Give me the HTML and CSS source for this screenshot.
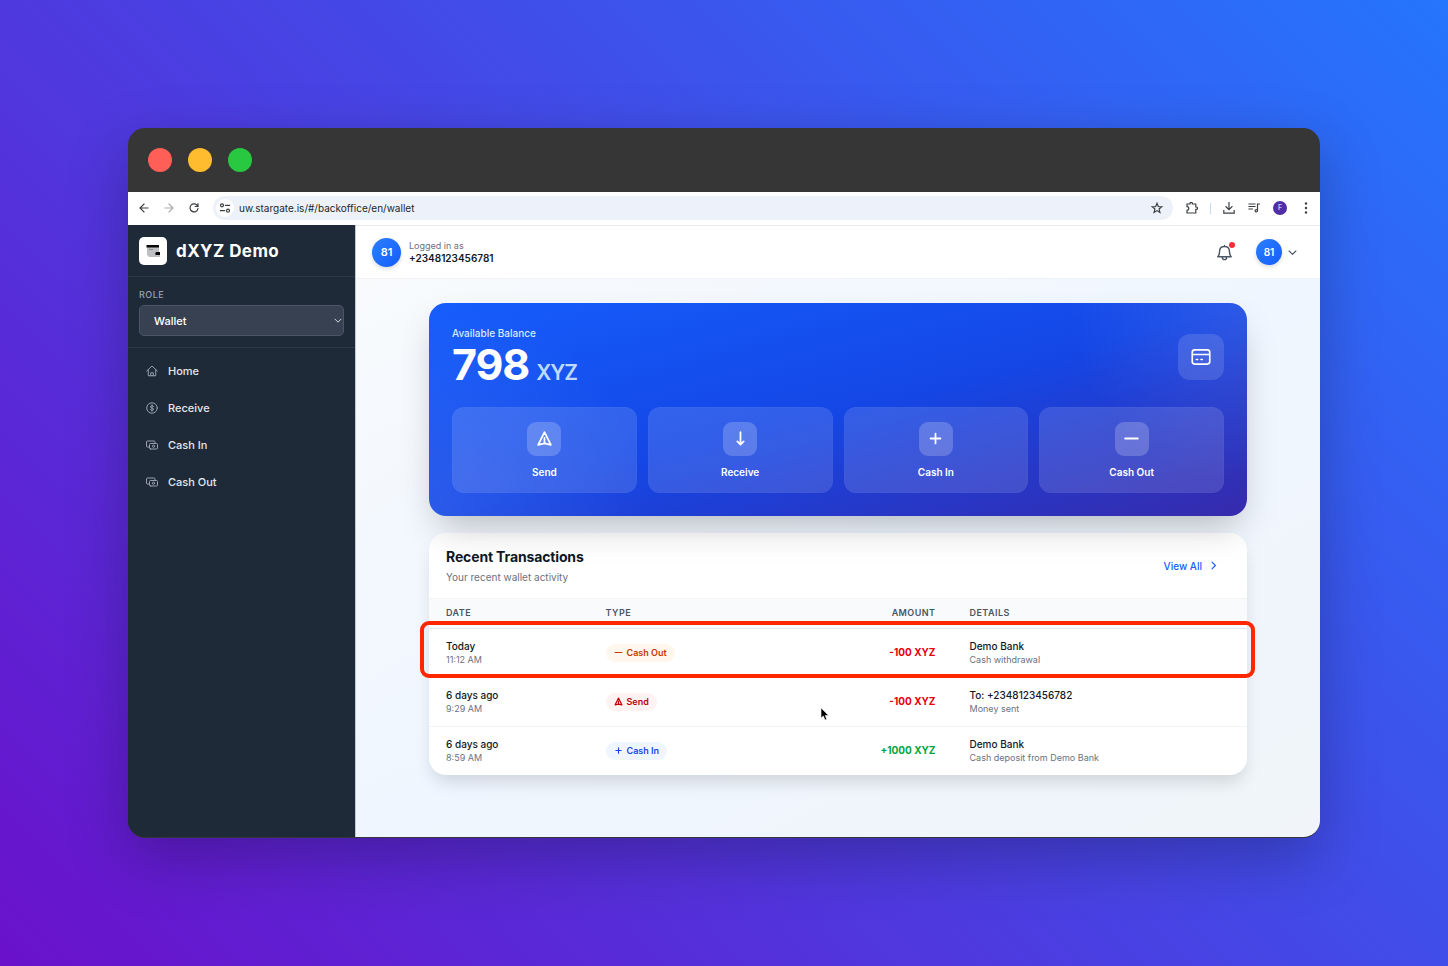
FILE: index.html
```html
<!DOCTYPE html>
<html lang="en">
<head>
<meta charset="utf-8">
<title>dXYZ Demo - Wallet</title>
<meta name="viewport" content="width=device-width, initial-scale=1">
<link rel="stylesheet" href="styles.css">
</head>
<body>

<!-- shared icons -->
<svg class="defs" width="0" height="0" aria-hidden="true">
	<symbol id="i-send" viewBox="0 0 24 24"><path d="M12 19l9 2-9-18-9 18 9-2zm0 0v-8"/></symbol>
	<symbol id="i-plus" viewBox="0 0 24 24"><path d="M12 5v14M5 12h14"/></symbol>
	<symbol id="i-minus" viewBox="0 0 24 24"><path d="M3 12h18"/></symbol>
	<symbol id="i-down" viewBox="0 0 24 24"><path d="M12 3v17M7.500 16l4.500 4.500 4.500-4.500"/></symbol>
	<symbol id="i-chev" viewBox="0 0 24 24"><path d="M3 8l9 9 9-9"/></symbol>
	<symbol id="i-cash" viewBox="0 0 24 24"><path d="M18 7.500V6a2 2 0 0 0-2-2H3a2 2 0 0 0-2 2v8a2 2 0 0 0 2 2h3M9 20h12a2 2 0 0 0 2-2v-7a2 2 0 0 0-2-2H9a2 2 0 0 0-2 2v7a2 2 0 0 0 2 2z"/><circle cx="15" cy="14.500" r="2.200"/></symbol>
</svg>

<div class="window">

	<div class="titlebar">
		<span class="dot red"></span>
		<span class="dot yellow"></span>
		<span class="dot green"></span>
	</div>

	<div class="toolbar">
		<button type="button" class="tool" aria-label="Back"><svg viewBox="0 0 12 12"><path d="M10 6H2M6 2L2 6l4 4"/></svg></button>
		<button type="button" class="tool off" aria-label="Forward"><svg viewBox="0 0 12 12"><path d="M2 6h8M6 2l4 4-4 4"/></svg></button>
		<button type="button" class="tool" aria-label="Reload"><svg viewBox="0 0 12 12"><path d="M9.700 4.200A4 4 0 1 0 10 6.500M10 1.800v2.700H7.300"/></svg></button>
		<div class="address">
			<span class="site"><svg viewBox="0 0 12 12"><circle cx="3" cy="3.300" r="1.500"/><path d="M6.500 3.300h4M1.500 8.700h4"/><circle cx="9" cy="8.700" r="1.500"/></svg></span>
			<input type="text" aria-label="Address" value="uw.stargate.is/#/backoffice/en/wallet">
			<button type="button" class="tool" aria-label="Bookmark"><svg viewBox="0 0 12 12"><path d="M6 1.300l1.300 3.200 3.400.300-2.600 2.200.800 3.400L6 8.600l-2.900 1.800.800-3.400L1.300 4.800l3.400-.300z"/></svg></button>
		</div>
		<div class="tools">
			<button type="button" class="tool" aria-label="Extensions"><svg viewBox="0 0 12 12"><path d="M1 2h3v-.500a1.200 1.200 0 0 1 2.400 0V2h3.400v3h.500a1.200 1.200 0 0 1 0 2.400h-.500V11H1V8.300a1.800 1.800 0 0 0 0-3.600z"/></svg></button>
			<span class="bar"></span>
			<button type="button" class="tool" aria-label="Downloads"><svg viewBox="0 0 12 12"><path d="M6 .500v7M3 4.700l3 3 3-3M.800 8.500v2.700h10.400V8.500"/></svg></button>
			<button type="button" class="tool" aria-label="Media"><svg viewBox="0 0 12 12"><path d="M1 2h6M1 4.500h6M1 7h3.500M9.500 8.500V2h2"/><circle cx="8.300" cy="8.700" r="1.200"/></svg></button>
			<button type="button" class="profile">F</button>
			<button type="button" class="tool menu" aria-label="Menu"><svg viewBox="0 0 12 12"><circle cx="6" cy="1.500" r="1.200"/><circle cx="6" cy="6" r="1.200"/><circle cx="6" cy="10.500" r="1.200"/></svg></button>
		</div>
	</div>

	<div class="app">
		<aside class="sidebar">
			<div class="brand">
				<span class="logo"><svg viewBox="0 0 28 28"><path fill="#bdbfc2" d="M8 10h12v6h1v4H10l-2-2z"/><path fill="#050505" d="M7.500 8h12.500v2.500h-12.500zM17 15h4v3h-4l-1-1z"/><path fill="#8b8d90" d="M10 12h4v1h-4z"/></svg></span>
				<h1>dXYZ Demo</h1>
			</div>
			<div class="role">
				<label for="role">ROLE</label>
				<div class="select">
					<select id="role"><option>Wallet</option></select>
					<svg class="icon"><use href="#i-chev"/></svg>
				</div>
			</div>
			<nav>
				<a href="#"><svg viewBox="0 0 24 24"><path d="M1.500 12L12 2l10.500 10M4.500 9.500V21.500h15V9.500M9.500 21.500v-6h5v6"/></svg>Home</a>
				<a href="#"><svg viewBox="0 0 24 24"><circle cx="12" cy="12" r="10.500"/><path d="M12 5.500v13M15.200 9c-.500-1-1.700-1.500-3.200-1.500-1.800 0-3.200.800-3.200 2.200 0 3.300 6.500 1.500 6.500 4.700 0 1.400-1.500 2.200-3.300 2.200-1.600 0-2.900-.600-3.400-1.700"/></svg>Receive</a>
				<a href="#"><svg><use href="#i-cash"/></svg>Cash In</a>
				<a href="#"><svg><use href="#i-cash"/></svg>Cash Out</a>
			</nav>
		</aside>

		<div class="main">
			<header class="topbar">
				<span class="avatar large">81</span>
				<div class="who">
					<span>Logged in as</span>
					<strong>+2348123456781</strong>
				</div>
				<button type="button" class="bell" aria-label="Notifications">
					<svg viewBox="0 0 24 24"><path d="M2.500 18h19c-2-2-2.500-3.500-2.500-7.500 0-4-2.500-7-7-7s-7 3-7 7c0 4-.500 5.500-2.500 7.500zM12 3.500V2M9 18.500v.500a3 3 0 0 0 6 0v-.500"/></svg>
					<span class="badge"></span>
				</button>
				<button type="button" class="account">
					<span class="avatar">81</span>
					<svg class="icon"><use href="#i-chev"/></svg>
				</button>
			</header>

			<div class="content">
				<section class="balance">
					<div class="balance-top">
						<div>
							<p class="caption">Available Balance</p>
							<p class="total">798 <span>XYZ</span></p>
						</div>
						<span class="card-icon"><svg viewBox="0 0 24 24"><rect x="1.500" y="3.500" width="21" height="17" rx="3"/><path d="M2 9h20M6.500 15h1.500M12 15h1.500"/></svg></span>
					</div>
					<div class="actions">
						<button type="button"><span><svg><use href="#i-send"/></svg></span>Send</button>
						<button type="button"><span><svg><use href="#i-down"/></svg></span>Receive</button>
						<button type="button"><span><svg><use href="#i-plus"/></svg></span>Cash In</button>
						<button type="button"><span><svg><use href="#i-minus"/></svg></span>Cash Out</button>
					</div>
				</section>

				<section class="recent">
					<div class="recent-top">
						<div>
							<h2>Recent Transactions</h2>
							<p>Your recent wallet activity</p>
						</div>
						<a href="#">View All <svg class="icon" viewBox="0 0 24 24"><path d="M8 3l9 9-9 9"/></svg></a>
					</div>
					<div class="table-wrap">
						<table>
							<thead>
								<tr><th class="c-date">Date</th><th class="c-type">Type</th><th class="c-amount">Amount</th><th>Details</th></tr>
							</thead>
							<tbody>
								<tr>
									<td><b>Today</b><small>11:12 AM</small></td>
									<td><span class="tag out"><svg><use href="#i-minus"/></svg>Cash Out</span></td>
									<td class="amount minus">-100 XYZ</td>
									<td><b>Demo Bank</b><small>Cash withdrawal</small></td>
								</tr>
								<tr>
									<td><b>6 days ago</b><small>9:29 AM</small></td>
									<td><span class="tag send"><svg><use href="#i-send"/></svg>Send</span></td>
									<td class="amount minus">-100 XYZ</td>
									<td><b>To: +2348123456782</b><small>Money sent</small></td>
								</tr>
								<tr>
									<td><b>6 days ago</b><small>8:59 AM</small></td>
									<td><span class="tag in"><svg><use href="#i-plus"/></svg>Cash In</span></td>
									<td class="amount plus">+1000 XYZ</td>
									<td><b>Demo Bank</b><small>Cash deposit from Demo Bank</small></td>
								</tr>
							</tbody>
						</table>
						<div class="highlight"></div>
						<svg class="cursor" viewBox="0 0 10 14"><path d="M1 1v10l2.300-2 1.700 4 1.800-.800L5.200 8.400h3.300z"/></svg>
					</div>
				</section>
			</div>
		</div>
	</div>
</div>

</body>
</html>
```
FILE: styles.css
```css
* {
	box-sizing: border-box;
}

body {
	margin: 0;
	padding: 128px;
	min-height: 100vh;
	display: flex;
	font-family: Inter, "Liberation Sans", sans-serif;
	font-size: 10px;
	line-height: 14px;
	color: #101828;
	background: linear-gradient(45deg, #6a11cb, #2575fc);
}

h1, h2, p {
	margin: 0;
}

button {
	padding: 0;
	border: 0;
	background: none;
	font: inherit;
	color: inherit;
}

a {
	text-decoration: none;
}

svg {
	display: block;
	fill: none;
	stroke: currentColor;
	stroke-width: 2;
	stroke-linecap: round;
	stroke-linejoin: round;
}

.defs {
	position: absolute;
}

.icon {
	width: 9px;
	height: 9px;
	stroke-width: 3;
}

/* browser window */

.window {
	flex: 1;
	min-width: 0;
	display: flex;
	flex-direction: column;
	border-bottom: 1px solid #363636;
	border-radius: 17px;
	overflow: hidden;
	background: #363636;
	box-shadow: 0 20px 60px rgba(0, 0, 0, .25);
}

.titlebar {
	height: 64px;
	padding: 0 20px;
	display: flex;
	align-items: center;
	gap: 16px;
}

.dot {
	width: 24px;
	height: 24px;
	border-radius: 50%;
}

.red { background: #ff5f57; }
.yellow { background: #febc2e; }
.green { background: #28c840; }

.toolbar {
	height: 34px;
	padding: 0 8px 1px 10px;
	display: flex;
	align-items: center;
	gap: 13px;
	background: #fff;
	border-bottom: 1px solid #e8eaee;
	color: #3c4043;
}

.tool svg,
.site svg {
	width: 12px;
	height: 12px;
	stroke-width: 1.2;
	stroke-linecap: square;
	stroke-linejoin: miter;
}

.off {
	color: #a9acb0;
}

.menu svg {
	fill: currentColor;
	stroke: none;
}

.address {
	flex: 1;
	height: 24px;
	padding: 0 10px 0 3px;
	display: flex;
	align-items: center;
	gap: 5px;
	border-radius: 12px;
	background: #ecf1fa;
}

.address input {
	flex: 1;
	min-width: 0;
	padding: 0;
	border: 0;
	background: none;
	font: inherit;
	color: #24272b;
}

.site {
	width: 18px;
	height: 18px;
	padding: 3px;
	border-radius: 50%;
	background: #fff;
}

.tools {
	display: flex;
	align-items: center;
	gap: 13px;
}

.bar {
	width: 1px;
	height: 11px;
	margin: 0 -1px;
	background: #c6dafa;
}

.profile {
	width: 14px;
	height: 14px;
	border-radius: 50%;
	background: #512da8;
	color: #fff;
	font-size: 7px;
}

/* sidebar */

.app {
	flex: 1;
	display: flex;
	margin-top: -1px;
}

.sidebar {
	width: 228px;
	flex-shrink: 0;
	border-right: 1px solid #c3c9d1;
	background: #1e2a37;
	color: #e5e7eb;
}

.brand {
	height: 52px;
	padding: 0 11px;
	display: flex;
	align-items: center;
	gap: 9px;
	border-bottom: 1px solid #2d3947;
}

.logo {
	width: 28px;
	height: 28px;
	border-radius: 5px;
	background: #fff;
}

.logo svg {
	stroke: none;
}

.brand h1 {
	font-size: 17px;
	line-height: 24px;
	font-weight: 700;
	letter-spacing: .025em;
	color: #fff;
}

.role {
	padding: 11px;
	border-bottom: 1px solid #2d3947;
}

.role label {
	display: block;
	margin-bottom: 3px;
	font-size: 9px;
	font-weight: 500;
	letter-spacing: .05em;
	color: #99a1af;
}

.select {
	position: relative;
}

.select select {
	width: 100%;
	height: 31px;
	padding: 0 14px;
	appearance: none;
	border: 1px solid #4a5565;
	border-radius: 5px;
	background: #374151;
	font: 500 11px Inter, sans-serif;
	color: #fff;
}

.select .icon {
	position: absolute;
	right: 2px;
	top: 11px;
	width: 8px;
	color: #d1d5dc;
}

nav {
	padding: 7px 18px;
	display: grid;
	gap: 6px;
}

nav a {
	height: 31px;
	display: flex;
	align-items: center;
	gap: 10px;
	font-size: 11px;
	font-weight: 500;
	color: #e5e7eb;
}

nav svg {
	width: 12px;
	height: 12px;
	color: #99a1af;
}

/* top bar */

.main {
	flex: 1;
	min-width: 0;
	display: flex;
	flex-direction: column;
}

.topbar {
	height: 54px;
	padding: 0 23px 0 16px;
	display: flex;
	align-items: center;
	background: #fff;
	border-top: 1px solid #e8eaee;
	border-bottom: 1px solid #f0f2f5;
}

.avatar {
	width: 26px;
	height: 26px;
	border-radius: 50%;
	display: flex;
	align-items: center;
	justify-content: center;
	background: linear-gradient(135deg, #2b7fff, #155dfc);
	box-shadow: 0 2px 4px rgba(0, 0, 0, .15);
	font-weight: 600;
	color: #fff;
}

.avatar.large {
	width: 29px;
	height: 29px;
	font-size: 11px;
}

.who {
	margin: 0 auto 0 8px;
	line-height: 13px;
}

.who span,
.who strong {
	display: block;
}

.who span {
	font-size: 9px;
	color: #6a7282;
}

.who strong {
	font-weight: 600;
}

.bell {
	position: relative;
	margin-right: 23px;
	color: #4a5565;
}

.bell svg {
	width: 17px;
	height: 17px;
}

.badge {
	position: absolute;
	top: -2px;
	right: -2px;
	width: 6px;
	height: 6px;
	border-radius: 50%;
	background: #fb2c36;
}

.account {
	display: flex;
	align-items: center;
	gap: 6px;
}

.account .icon {
	color: #4a5565;
}

/* wallet */

.content {
	flex: 1;
	padding: 24px 34px;
	background: linear-gradient(to bottom right, #f8fafc, #eff6ff 50%, #f1f5f9);
}

.balance,
.recent {
	max-width: 818px;
	margin: 0 auto;
	position: relative;
	border-radius: 17px;
}

.balance {
	z-index: 1;
	margin-bottom: 17px;
	padding: 23px;
	background:
		radial-gradient(circle at 100% 0, rgba(255, 255, 255, .1), transparent 180px),
		radial-gradient(circle at 0 100%, rgba(255, 255, 255, .1), transparent 220px),
		linear-gradient(to bottom right, #155dfc, #1447e6 50%, #372aac);
	box-shadow: 0 18px 36px -9px rgba(0, 0, 0, .25);
	color: #fff;
}

.balance-top {
	display: flex;
	align-items: center;
	justify-content: space-between;
	margin-bottom: 20px;
}

.caption {
	font-weight: 500;
	color: #dbeafe;
}

.total {
	margin-top: 2px;
	display: flex;
	align-items: baseline;
	gap: 7px;
	font-size: 43px;
	line-height: 45px;
	font-weight: 700;
	letter-spacing: -.025em;
}

.total span {
	font-size: 21px;
	line-height: 24px;
	font-weight: 600;
	color: #bedbff;
}

.card-icon {
	width: 46px;
	height: 46px;
	display: grid;
	place-items: center;
	border-radius: 12px;
	background: rgba(255, 255, 255, .13);
}

.card-icon svg {
	width: 20px;
	height: 20px;
}

.actions {
	display: grid;
	grid-template-columns: repeat(4, 1fr);
	gap: 11px;
}

.actions button {
	height: 86px;
	display: flex;
	flex-direction: column;
	align-items: center;
	justify-content: center;
	gap: 9px;
	border: 1px solid rgba(255, 255, 255, .02);
	border-radius: 12px;
	background: rgba(255, 255, 255, .13);
	font-weight: 600;
}

.actions span {
	width: 34px;
	height: 34px;
	display: grid;
	place-items: center;
	border-radius: 9px;
	background: rgba(255, 255, 255, .2);
}

.actions svg {
	width: 17px;
	height: 17px;
	stroke-width: 2.5;
}

/* recent transactions */

.recent {
	background: #fff;
	box-shadow: 0 10px 18px -4px rgba(0, 0, 0, .15);
}

.recent-top {
	height: 66px;
	padding: 0 29px 0 17px;
	display: flex;
	align-items: center;
	justify-content: space-between;
	border-bottom: 1px solid #f3f4f6;
}

.recent-top h2 {
	margin-bottom: 3px;
	font-size: 14px;
	line-height: 20px;
	font-weight: 700;
	letter-spacing: -.01em;
}

.recent-top p {
	color: #6a7282;
}

.recent-top a {
	display: flex;
	align-items: center;
	gap: 7px;
	font-weight: 500;
	color: #155dfc;
}

.table-wrap {
	position: relative;
}

table {
	width: 100%;
	table-layout: fixed;
	border-collapse: collapse;
}

th {
	height: 29px;
	padding: 0 17px;
	background: #f9fafb;
	border-bottom: 1px solid #e5e7eb;
	font-size: 9px;
	line-height: 12px;
	font-weight: 600;
	letter-spacing: .05em;
	text-align: left;
	text-transform: uppercase;
	color: #4a5565;
}

.c-date {
	width: 19.5%;
}

.c-type {
	width: 22.5%;
}

.c-amount {
	width: 22%;
	text-align: right;
}

td {
	height: 49px;
	padding: 0 17px;
	border-bottom: 1px solid #f3f4f6;
	line-height: 13px;
}

tr:last-child td {
	border-bottom: 0;
}

td b {
	display: block;
	font-weight: 500;
}

td small {
	display: block;
	font-size: 9px;
	color: #6a7282;
}

.amount {
	text-align: right;
	font-weight: 700;
}

.minus {
	color: #e7000b;
}

.plus {
	color: #00a63e;
}

.tag {
	height: 18px;
	padding: 0 8px;
	display: inline-flex;
	align-items: center;
	gap: 4px;
	border-radius: 9px;
	font-size: 9px;
	font-weight: 600;
}

.tag svg {
	width: 9px;
	height: 9px;
	stroke-width: 3;
}

.out {
	background: #fff7ed;
	color: #ca3500;
}

.send {
	background: #fef2f2;
	color: #c10007;
}

.in {
	background: #eff6ff;
	color: #1447e6;
}

.highlight {
	position: absolute;
	top: 22px;
	left: -9px;
	right: -8px;
	height: 57px;
	border: 4px solid #ff2600;
	border-radius: 9px;
}

.cursor {
	position: absolute;
	top: 108px;
	left: 391px;
	width: 10px;
	height: 14px;
	fill: #000;
	stroke: #fff;
	stroke-width: .6;
}
```
